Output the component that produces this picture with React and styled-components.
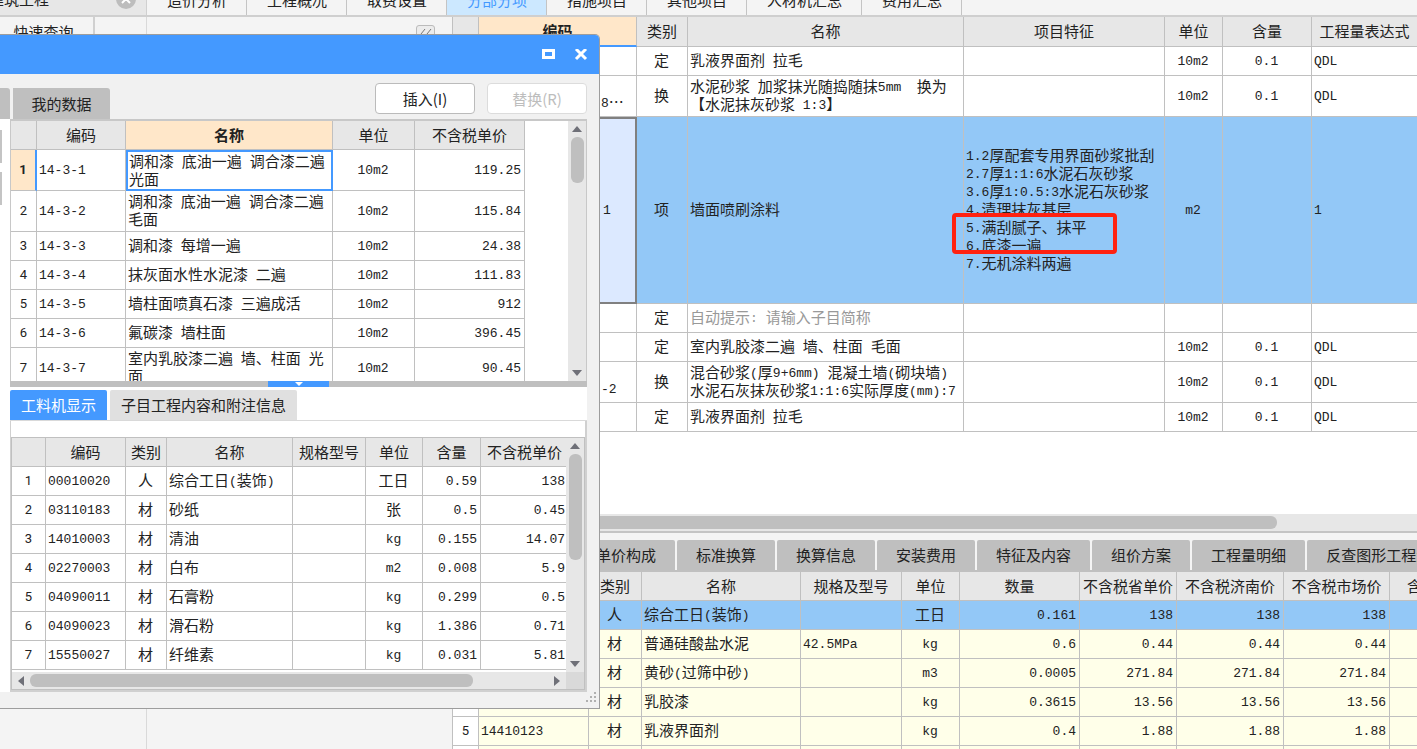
import React from 'react';
import styled, { createGlobalStyle, css } from 'styled-components';

const GlobalStyle = createGlobalStyle`
  * {
    box-sizing: border-box;
  }
  body {
    margin: 0;
    overflow: hidden;
    background: #f4f4f4;
    color: #222;
    font-family: 'Noto Sans CJK SC', sans-serif;
    font-size: 15px;
    line-height: 18px;
  }
  button {
    margin: 0;
    padding: 0;
    border: none;
    font: inherit;
    color: inherit;
    background: none;
    white-space: nowrap;
    cursor: pointer;
  }
`;

/* ---------- page ---------- */

const Page = styled.div`
  position: relative;
  display: flex;
  flex-direction: column;
  height: 100vh;
  overflow: hidden;
`;

const TopBar = styled.div`
  display: flex;
  align-items: flex-end;
  height: 17px;
  flex: none;
  overflow: hidden;
  border-bottom: 2px solid #cfcfcf;
`;

const DocTab = styled.div`
  display: flex;
  align-items: center;
  justify-content: space-between;
  flex: none;
  width: 147px;
  height: 32px;
  padding-right: 10px;
  background: #e7e7e7;
  border-right: 1px solid #d0d0d0;
  white-space: nowrap;

  span {
    margin-left: -11px;
  }
`;

const CloseDoc = styled.button`
  display: flex;
  height: 20px;
`;

const NavTab = styled.button`
  flex: none;
  height: 30px;
  padding: 0 20px;
  box-shadow: inset -1px 0 #c4c4c4;
  background: ${p => (p.$active ? '#cce8ff' : 'transparent')};
  color: ${p => (p.$active ? '#4499ff' : 'inherit')};
`;

const Body = styled.div`
  display: flex;
  flex: 1;
  min-height: 0;
`;

const Tree = styled.div`
  flex: none;
  width: 147px;
  border-right: 1px solid #d9d9d9;
`;

const TreeTab = styled.button`
  width: 95px;
  height: 30px;
  padding-right: 6px;
  border-right: 2px solid #d0d0d0;
`;

const SidePanel = styled.div`
  display: flex;
  justify-content: flex-end;
  align-items: flex-start;
  flex: none;
  width: 305px;
  padding: 8px 17px;
`;

const CollapseButton = styled.button`
  display: flex;
  align-items: center;
  justify-content: center;
  width: 19px;
  height: 18px;
  border: 1px solid #bbb;
  border-radius: 3px;
  background: #ececec;
`;

const Main = styled.div`
  display: flex;
  flex-direction: column;
  flex: 1;
  min-width: 0;
  border-left: 1px solid #c0c0c0;
`;

const GridArea = styled.div`
  flex: 1;
  min-height: 0;
  overflow: hidden;
  background: #fff;
`;

const DetailPanel = styled.div`
  flex: none;
  height: 235px;
  overflow: hidden;
`;

const DetailTabs = styled.div`
  display: flex;
  gap: 2px;
  padding: 7px 0 0 9px;
  overflow: hidden;
  border-top: 2px solid #c4c4c4;
  border-bottom: 2px solid #c0c0c0;
`;

const DetailTab = styled.button`
  flex: none;
  height: 30px;
  padding: 0 19px;
  border-radius: 2px 2px 0 0;
  background: #bfbfbf;
`;

/* ---------- tables ---------- */

const Table = styled.table`
  width: ${p => p.$width || '100%'};
  table-layout: fixed;
  border-collapse: separate;
  border-spacing: 0;
`;

const Th = styled.th`
  height: ${p => p.$height || 29}px;
  padding: 0 0 1px;
  border: solid #c0c0c0;
  border-width: 0 1px 1px 0;
  background: ${p => (p.$current ? '#ffe7c9' : '#e7e7e7')};
  font-weight: ${p => (p.$current ? 700 : 400)};
  white-space: nowrap;
  overflow: hidden;
  ${p =>
    p.$line &&
    css`
      border-bottom: 2px solid #4499ff;
    `}
`;

const Td = styled.td`
  position: relative;
  height: ${p => p.$height || 29}px;
  padding: 0 3px ${p => (p.$low ? 5 : 3)}px ${p => p.$indent || 2}px;
  border: solid #c0c0c0;
  border-width: 0 1px 1px 0;
  text-align: ${p => p.$align || 'left'};
  vertical-align: ${p => (p.$low ? 'bottom' : 'middle')};
  white-space: pre-wrap;
  background: ${p => p.$bg || 'transparent'};
  color: ${p => (p.$muted ? '#999' : 'inherit')};
  ${p =>
    p.$focused &&
    css`
      border: 2px solid #4499ff;
      padding: 0 1px 1px;
    `}
  ${p =>
    p.$picked &&
    css`
      border: 2px solid #808080;
      background: #dce9ff;
    `}
`;

const RowHead = styled.th`
  height: 29px;
  padding: 0;
  border: solid #c0c0c0;
  border-width: 0 1px 1px 0;
  background: #fff;
  font-family: Roboto, sans-serif;
  font-size: 13px;
  font-weight: 400;
  ${p =>
    p.$current &&
    css`
      border-right: 2px solid #4499ff;
      background: #ffe7c9;
      font-weight: 700;
    `}
`;

const Half = styled.span`
  font-family: 'Liberation Mono', monospace;
  font-size: 13px;
  line-height: 1;
  vertical-align: 1px;
`;

const Highlight = styled.div`
  position: absolute;
  top: 96px;
  left: -12px;
  width: 165px;
  height: 41px;
  border: 4px solid #ff2211;
  border-radius: 4px;
`;

// half-width characters use the mono face, everything else the CJK one
const Text = ({ children }) =>
  String(children)
    .split(/([\x20-\x7e]+)/)
    .map((part, i) => (i % 2 ? <Half key={i}>{part}</Half> : part));

const Cols = ({ widths }) => (
  <colgroup>
    {widths.map((w, i) => (
      <col key={i} style={w ? { width: w } : undefined} />
    ))}
  </colgroup>
);

/* ---------- scrollbars ---------- */

const VTrack = styled.div`
  display: flex;
  flex-direction: column;
  align-items: center;
  justify-content: space-between;
  flex: none;
  width: 18px;
  padding: 5px 0;
  background: #e7e7e7;
`;

const VThumb = styled.div`
  width: 13px;
  height: ${p => p.$size}px;
  margin: 5px 0 auto;
  border-radius: 6px;
  background: #bfbfbf;
`;

const HTrack = styled.div`
  display: flex;
  align-items: center;
  flex: none;
  height: 17px;
  padding: ${p => (p.$arrows ? '0 6px' : 0)};
  background: #e7e7e7;
`;

const HThumb = styled.div`
  width: ${p => p.$size};
  height: 13px;
  margin: 0 auto 0 ${p => p.$start || 0}px;
  border-radius: 6px;
  background: #bfbfbf;
`;

const Arrow = ({ d, w = 10, h = 6, fill = '#6f7078' }) => (
  <svg width={w} height={h} viewBox={`0 0 ${w} ${h}`} style={{ flex: 'none' }}>
    <path d={d} fill={fill} />
  </svg>
);

/* ---------- dialog ---------- */

const Dialog = styled.div`
  position: absolute;
  top: 34px;
  left: 0;
  display: flex;
  flex-direction: column;
  width: 600px;
  height: 675px;
  border: solid #9d9d9d;
  border-width: 1px 1px 1px 0;
  border-radius: 0 5px 0 0;
  background: #f1f1f1;
  overflow: hidden;
`;

const TitleBar = styled.div`
  display: flex;
  align-items: center;
  justify-content: flex-end;
  gap: 18px;
  flex: none;
  height: 39px;
  padding-right: 11px;
  background: #4499ff;

  button {
    display: flex;
  }
`;

const DialogTools = styled.div`
  display: flex;
  align-items: flex-end;
  flex: none;
  height: 45px;
  padding-right: 12px;
`;

const SourceTab = styled.button`
  flex: none;
  width: ${p => p.$width}px;
  height: 31px;
  margin-right: 3px;
  border-radius: 0 3px 0 0;
  background: #bfbfbf;
`;

const ToolButton = styled.button`
  width: 100px;
  height: 31px;
  margin: 0 0 5px 12px;
  border: 1px solid #bbb;
  border-radius: 4px;
  background: #fff;

  &:disabled {
    border-color: #dcdcdc;
    color: #bdbdbd;
    cursor: default;
  }
`;

const Spacer = styled.div`
  flex: 1;
`;

const DialogBody = styled.div`
  display: flex;
  height: 573px;
  padding-right: 12px;
`;

const LeftSliver = styled.div`
  display: flex;
  flex-direction: column;
  gap: 9px;
  flex: none;
  width: 10px;
  padding-top: 11px;
  background: #fff;
`;

const SliverBox = styled.div`
  width: 2px;
  height: 33px;
  background: #c4c4c4;
`;

const Content = styled.div`
  display: flex;
  flex-direction: column;
  flex: 1;
  min-width: 0;
  background: #fff;
`;

const UpperPane = styled.div`
  display: flex;
  justify-content: space-between;
  flex: none;
  height: 262px;
  overflow: hidden;
  border: solid #c8c8c8;
  border-width: 2px 1px 0 1px;
`;

const Splitter = styled.div`
  display: flex;
  justify-content: center;
  flex: none;
  height: 6px;
  background: #bfbfbf;
`;

const SplitterHandle = styled.button`
  display: flex;
  justify-content: center;
  width: 61px;
  height: 6px;
  background: #4499ff;
`;

const PaneTabs = styled.div`
  display: flex;
  gap: 3px;
  flex: none;
  padding-top: 3px;
  border-bottom: 1px solid #d9d9d9;
`;

const PaneTab = styled.button`
  height: 30px;
  padding: 0 11px;
  border-radius: 2px 2px 0 0;
  background: ${p => (p.$active ? '#4499ff' : '#e0e0e0')};
  color: ${p => (p.$active ? '#fff' : 'inherit')};
`;

const LowerPane = styled.div`
  display: flex;
  flex-direction: column;
  flex: 1;
  min-height: 0;
  padding-top: 16px;
  border: solid #d0d0d0;
  border-width: 0 2px 2px 1px;
`;

const LowerGrid = styled.div`
  display: flex;
  flex: 1;
  min-height: 0;
  border: solid #c0c0c0;
  border-width: 1px 1px 0 1px;
`;

const Clip = styled.div`
  flex: ${p => (p.$grow ? 1 : 'none')};
  min-width: 0;
  overflow: hidden;
`;

const LowerFoot = styled.div`
  display: flex;
  border: solid #c0c0c0;
  border-width: 0 1px 1px 1px;

  > :first-child {
    flex: 1;
  }
`;

const Corner = styled.div`
  width: 18px;
  background: #d9d9d9;
`;

const Grip = styled.svg`
  margin: auto 2px 4px auto;
`;

/* ---------- data ---------- */

const NAV = ['造价分析', '工程概况', '取费设置', '分部分项', '措施项目', '其他项目', '人材机汇总', '费用汇总'];

const DETAIL_TABS = [
  '工料机显示', '单价构成', '标准换算', '换算信息', '安装费用',
  '特征及内容', '组价方案', '工程量明细', '反查图形工程量',
];

const FEATURES = `1.2厚配套专用界面砂浆批刮
2.7厚1:1:6水泥石灰砂浆
3.6厚1:0.5:3水泥石灰砂浆
4.清理抹灰基层
5.满刮腻子、抹平
6.底漆一遍
7.无机涂料两遍`;

const ITEMS = [
  { kind: '定', name: '乳液界面剂 拉毛', unit: '10m2', qty: '0.1', expr: 'QDL' },
  { code: '8…', kind: '换', name: '水泥砂浆 加浆抹光随捣随抹5mm  换为\n【水泥抹灰砂浆 1:3】', unit: '10m2', qty: '0.1', expr: 'QDL', height: 41 },
  { code: '1', kind: '项', name: '墙面喷刷涂料', feature: FEATURES, unit: 'm2', expr: '1', height: 187, selected: true },
  { kind: '定', name: '自动提示: 请输入子目简称', muted: true },
  { kind: '定', name: '室内乳胶漆二遍 墙、柱面 毛面', unit: '10m2', qty: '0.1', expr: 'QDL' },
  { code: '-2', kind: '换', name: '混合砂浆(厚9+6mm) 混凝土墙(砌块墙)\n水泥石灰抹灰砂浆1:1:6实际厚度(mm):7', unit: '10m2', qty: '0.1', expr: 'QDL', height: 41 },
  { kind: '定', name: '乳液界面剂 拉毛', unit: '10m2', qty: '0.1', expr: 'QDL' },
];

const RESOURCES = [
  ['', '人', '综合工日(装饰)', '', '工日', '0.161', '138', '138', '138'],
  ['', '材', '普通硅酸盐水泥', '42.5MPa', 'kg', '0.6', '0.44', '0.44', '0.44'],
  ['', '材', '黄砂(过筛中砂)', '', 'm3', '0.0005', '271.84', '271.84', '271.84'],
  ['', '材', '乳胶漆', '', 'kg', '0.3615', '13.56', '13.56', '13.56'],
  ['14410123', '材', '乳液界面剂', '', 'kg', '0.4', '1.88', '1.88', '1.88'],
  ['', '', '', '', '', '', '', '', ''],
];

const QUOTAS = [
  ['14-3-1', '调和漆 底油一遍 调合漆二遍\n光面', '10m2', '119.25'],
  ['14-3-2', '调和漆 底油一遍 调合漆二遍\n毛面', '10m2', '115.84'],
  ['14-3-3', '调和漆 每增一遍', '10m2', '24.38'],
  ['14-3-4', '抹灰面水性水泥漆 二遍', '10m2', '111.83'],
  ['14-3-5', '墙柱面喷真石漆 三遍成活', '10m2', '912'],
  ['14-3-6', '氟碳漆 墙柱面', '10m2', '396.45'],
  ['14-3-7', '室内乳胶漆二遍 墙、柱面 光\n面', '10m2', '90.45'],
];

const MATERIALS = [
  ['00010020', '人', '综合工日(装饰)', '', '工日', '0.59', '138'],
  ['03110183', '材', '砂纸', '', '张', '0.5', '0.45'],
  ['14010003', '材', '清油', '', 'kg', '0.155', '14.07'],
  ['02270003', '材', '白布', '', 'm2', '0.008', '5.9'],
  ['04090011', '材', '石膏粉', '', 'kg', '0.299', '0.5'],
  ['04090023', '材', '滑石粉', '', 'kg', '1.386', '0.71'],
  ['15550027', '材', '纤维素', '', 'kg', '0.031', '5.81'],
];

const BLUE = '#93c8f7';
const CREAM = '#ffffe9';

/* ---------- pieces ---------- */

const ItemGrid = () => (
  <Table $width="calc(100% + 1px)">
    <Cols widths={[26, 158, 51, 276, 201, 58, 89, null]} />
    <thead>
      <tr>
        <Th $height={30} />
        <Th $current $line>编码</Th>
        <Th>类别</Th>
        <Th>名称</Th>
        <Th>项目特征</Th>
        <Th>单位</Th>
        <Th>含量</Th>
        <Th>工程量表达式</Th>
      </tr>
    </thead>
    <tbody>
      {ITEMS.map((item, i) => {
        const cell = { $height: item.height, $bg: item.selected && BLUE };
        return (
          <tr key={i}>
            <RowHead />
            <Td {...cell} $indent={122} $picked={item.selected} $low={!item.selected}>
              <Text>{item.code || ''}</Text>
            </Td>
            <Td {...cell} $align="center">{item.kind}</Td>
            <Td {...cell} $muted={item.muted}>
              <Text>{item.name}</Text>
            </Td>
            <Td {...cell}>
              <Text>{item.feature || ''}</Text>
              {item.selected && <Highlight />}
            </Td>
            <Td {...cell} $align="center"><Text>{item.unit || ''}</Text></Td>
            <Td {...cell} $align="center"><Text>{item.qty || ''}</Text></Td>
            <Td {...cell}><Text>{item.expr || ''}</Text></Td>
          </tr>
        );
      })}
    </tbody>
  </Table>
);

const RESOURCE_ALIGN = ['left', 'center', 'left', 'left', 'center', 'right', 'right', 'right', 'right'];

const ResourceGrid = () => (
  <Table $width="calc(100% + 23px)">
    <Cols widths={[26, 110, 53, 159, 101, 58, 120, 97, 107, 106, null]} />
    <thead>
      <tr>
        <Th />
        {['编码', '类别', '名称', '规格及型号', '单位', '数量', '不含税省单价', '不含税济南价', '不含税市场价', '含'].map(h => (
          <Th key={h}>{h}</Th>
        ))}
      </tr>
    </thead>
    <tbody>
      {RESOURCES.map((row, i) => (
        <tr key={i}>
          <RowHead>{i + 1}</RowHead>
          {row.map((value, j) => (
            <Td key={j} $align={RESOURCE_ALIGN[j]} $bg={i === 0 ? BLUE : CREAM}>
              <Text>{value}</Text>
            </Td>
          ))}
          <Td $bg={i === 0 ? BLUE : CREAM} />
        </tr>
      ))}
    </tbody>
  </Table>
);

const QuotaGrid = () => (
  <Table $width="514px">
    <Cols widths={[26, 89, 207, 82, 110]} />
    <thead>
      <tr>
        <Th />
        <Th>编码</Th>
        <Th $current>名称</Th>
        <Th>单位</Th>
        <Th>不含税单价</Th>
      </tr>
    </thead>
    <tbody>
      {QUOTAS.map(([code, name, unit, price], i) => (
        <tr key={code}>
          <RowHead $current={i === 0}>{i + 1}</RowHead>
          <Td $height={name.includes('\n') ? 41 : 29}><Text>{code}</Text></Td>
          <Td $focused={i === 0}><Text>{name}</Text></Td>
          <Td $align="center"><Text>{unit}</Text></Td>
          <Td $align="right"><Text>{price}</Text></Td>
        </tr>
      ))}
    </tbody>
  </Table>
);

const MATERIAL_ALIGN = ['left', 'center', 'left', 'left', 'center', 'right', 'right'];

const MaterialGrid = () => (
  <Table $width="557px">
    <Cols widths={[34, 80, 41, 126, 73, 57, 58, 88]} />
    <thead>
      <tr>
        <Th />
        {['编码', '类别', '名称', '规格型号', '单位', '含量', '不含税单价'].map(h => (
          <Th key={h}>{h}</Th>
        ))}
      </tr>
    </thead>
    <tbody>
      {MATERIALS.map((row, i) => (
        <tr key={i}>
          <RowHead>{i + 1}</RowHead>
          {row.map((value, j) => (
            <Td key={j} $align={MATERIAL_ALIGN[j]}>
              <Text>{value}</Text>
            </Td>
          ))}
        </tr>
      ))}
    </tbody>
  </Table>
);

const QuotaDialog = () => (
  <Dialog role="dialog">
    <TitleBar>
      <button aria-label="最大化">
        <svg width="14" height="12" viewBox="0 0 14 12">
          <path d="M0 0h13v10H0zM3 3v4h7V3z" fill="#fff" fillRule="evenodd" />
        </svg>
      </button>
      <button aria-label="关闭">
        <svg width="14" height="12" viewBox="0 0 14 12">
          <path d="M2 0l10 10M12 0L2 10" stroke="#fff" strokeWidth="3" />
        </svg>
      </button>
    </TitleBar>
    <DialogTools>
      <SourceTab $width={10} />
      <SourceTab $width={97}>我的数据</SourceTab>
      <Spacer />
      <ToolButton>插入(I)</ToolButton>
      <ToolButton disabled>替换(R)</ToolButton>
    </DialogTools>
    <DialogBody>
      <LeftSliver>
        <SliverBox />
        <SliverBox />
      </LeftSliver>
      <Content>
        <UpperPane>
          <Clip>
            <QuotaGrid />
          </Clip>
          <VTrack>
            <Arrow d="M0 6l5-6 5 6z" />
            <VThumb $size={46} />
            <Arrow d="M0 0h10L5 6z" />
          </VTrack>
        </UpperPane>
        <Splitter>
          <SplitterHandle aria-label="折叠">
            <Arrow d="M0 1h8L4 5z" w={8} fill="#fff" />
          </SplitterHandle>
        </Splitter>
        <PaneTabs>
          <PaneTab $active>工料机显示</PaneTab>
          <PaneTab>子目工程内容和附注信息</PaneTab>
        </PaneTabs>
        <LowerPane>
          <LowerGrid>
            <Clip $grow>
              <MaterialGrid />
            </Clip>
            <VTrack>
              <Arrow d="M0 6l5-6 5 6z" />
              <VThumb $size={106} />
              <Arrow d="M0 0h10L5 6z" />
            </VTrack>
          </LowerGrid>
          <LowerFoot>
            <HTrack $arrows>
              <Arrow d="M6 0v10L0 5z" w={6} h={10} />
              <HThumb $start={6} $size="443px" />
              <Arrow d="M0 0v10l6-5z" w={6} h={10} />
            </HTrack>
            <Corner />
          </LowerFoot>
        </LowerPane>
      </Content>
    </DialogBody>
    <Grip width="12" height="12" viewBox="0 0 12 12" fill="#b0b0b0">
      <path d="M9 0h2v2H9zM5 4h2v2H5zM9 4h2v2H9zM1 8h2v2H1zM5 8h2v2H5zM9 8h2v2H9z" />
    </Grip>
  </Dialog>
);

const App = () => (
  <Page>
    <GlobalStyle />
    <TopBar>
      <DocTab>
        <span>建筑工程</span>
        <CloseDoc aria-label="关闭">
          <svg width="20" height="20" viewBox="0 0 20 20">
            <circle cx="10" cy="10" r="10" fill="#bdbdbd" />
            <path d="M6 6l8 8M14 6l-8 8" stroke="#fff" strokeWidth="2" />
          </svg>
        </CloseDoc>
      </DocTab>
      {NAV.map(label => (
        <NavTab key={label} $active={label === '分部分项'}>
          {label}
        </NavTab>
      ))}
    </TopBar>
    <Body>
      <Tree>
        <TreeTab>快速查询</TreeTab>
      </Tree>
      <SidePanel>
        <CollapseButton aria-label="收起">
          <svg width="12" height="10" viewBox="0 0 12 10">
            <path d="M5 0L1 5l4 5M11 0L7 5l4 5" fill="none" stroke="#777" />
          </svg>
        </CollapseButton>
      </SidePanel>
      <Main>
        <GridArea>
          <ItemGrid />
        </GridArea>
        <DetailPanel>
          <HTrack>
            <HThumb $start={20} $size="calc(100% - 160px)" />
          </HTrack>
          <DetailTabs>
            {DETAIL_TABS.map(label => (
              <DetailTab key={label}>{label}</DetailTab>
            ))}
          </DetailTabs>
          <ResourceGrid />
        </DetailPanel>
      </Main>
    </Body>
    <QuotaDialog />
  </Page>
);

export default App;
